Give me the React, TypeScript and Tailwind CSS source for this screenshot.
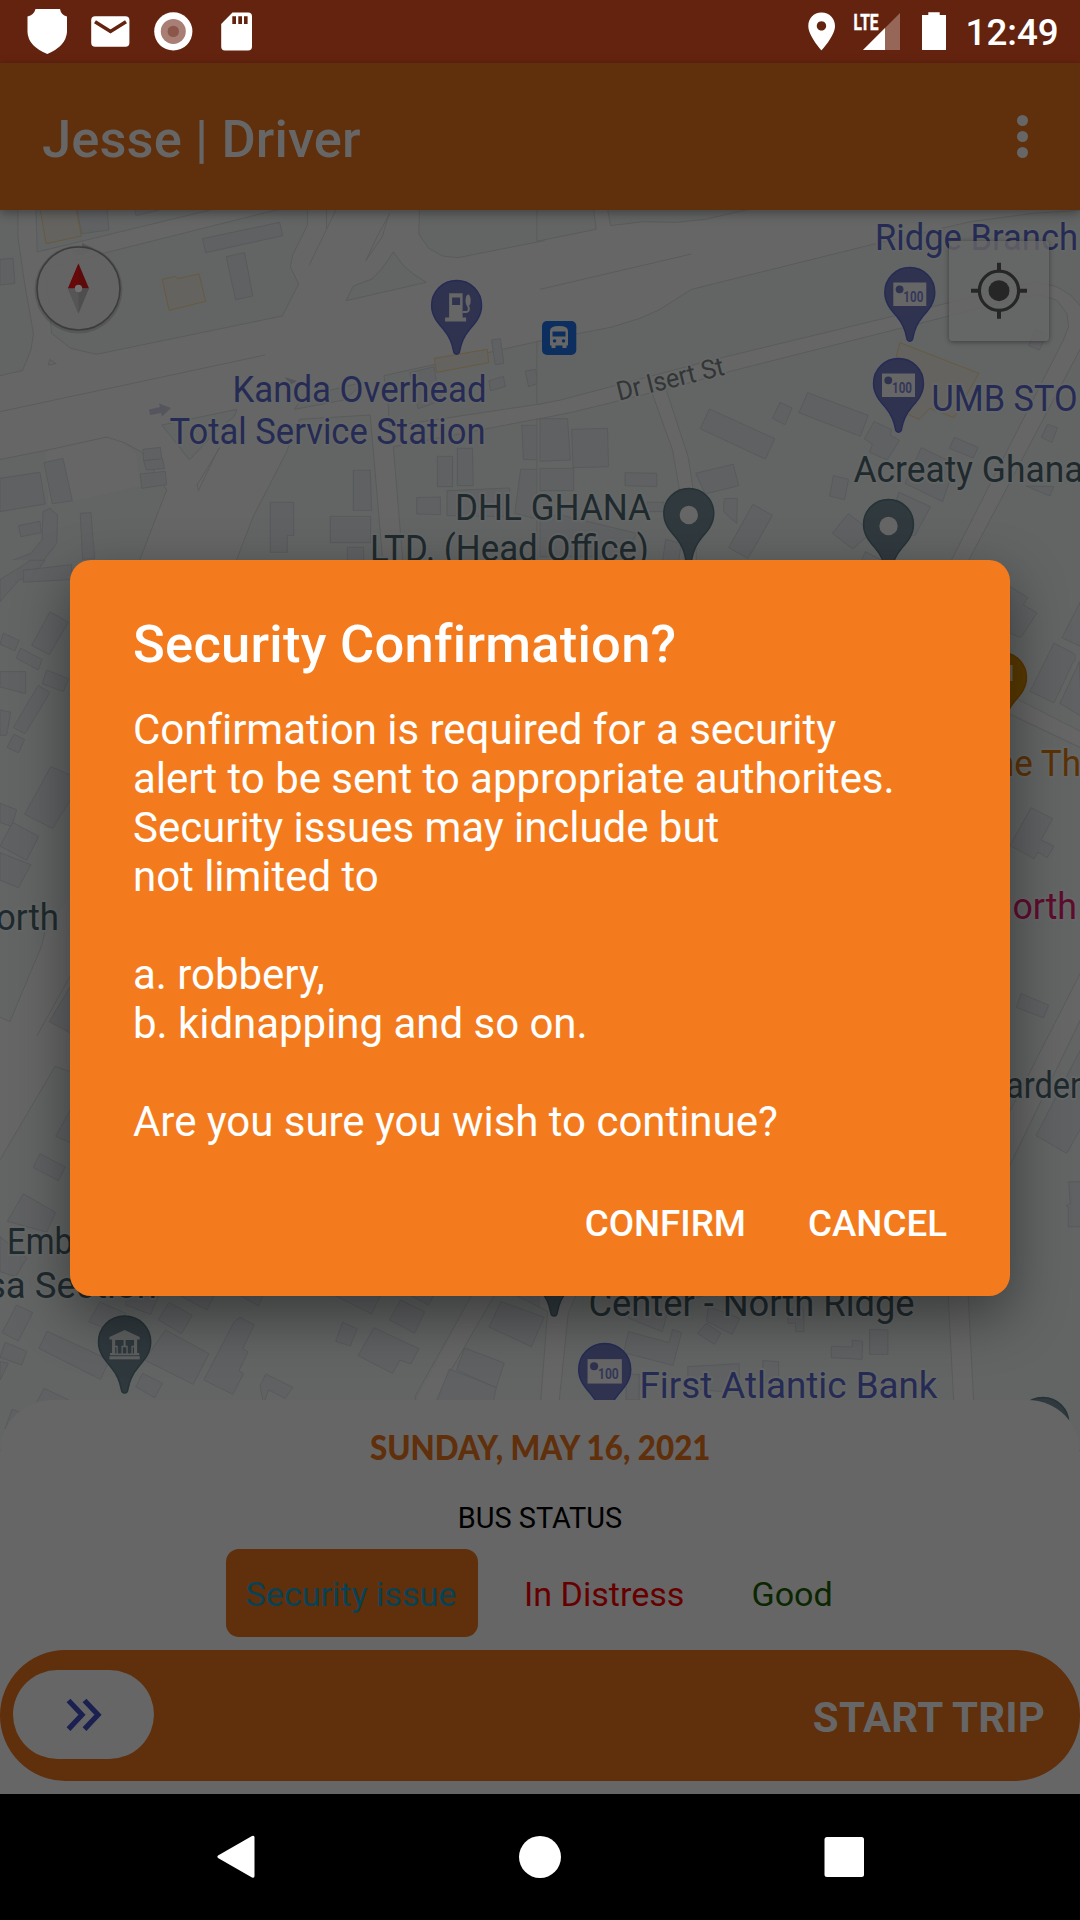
import React from "react";

const font = '"Roboto", "Noto Sans", sans-serif';

const LAND = "#626564";
const ROAD = "#666666";
const EDGE = "#5a5c5b";
const BUILDING = "#606163";
const BUILDING_EDGE = "#56585a";
const NAVY = "#252b54";
const SLATE = "#1f2a2e";

type TileProps = {
  x: number;
  y: number;
  sx?: number;
  sy?: number;
  land?: string[];
  roads?: string[];
  lines?: string[];
  buildings?: string[];
  shops?: string[];
};

function Tile({ x, y, sx = 0.34439, sy = 0.33333, land = [], roads = [], lines = [], buildings = [], shops = [] }: TileProps) {
  return (
    <g transform={`translate(${x} ${y}) scale(${sx} ${sy})`}>
      {land.map((p) => (
        <polygon key={p} points={p} fill={LAND} stroke={EDGE} strokeWidth="1" vectorEffect="non-scaling-stroke" />
      ))}
      {roads.map((p) => (
        <polygon key={p} points={p} fill={ROAD} />
      ))}
      {lines.map((p) => (
        <polyline key={p} points={p} fill="none" stroke={EDGE} strokeWidth="1" vectorEffect="non-scaling-stroke" />
      ))}
      {buildings.map((p) => (
        <polygon key={p} points={p} fill={BUILDING} stroke={BUILDING_EDGE} strokeWidth="0.8" vectorEffect="non-scaling-stroke" />
      ))}
      {shops.map((p) => (
        <polygon key={p} points={p} fill="#65635f" stroke="#675a40" strokeWidth="1" vectorEffect="non-scaling-stroke" />
      ))}
    </g>
  );
}

function Pin({ x, y, r = 25, fill, edge, children }: { x: number; y: number; r?: number; fill: string; edge: string; children?: React.ReactNode }) {
  return (
    <g transform={`translate(${x} ${y}) scale(${r / 25})`}>
      <path
        d="M0 .5C14 .5 25 11.500 25 25.500C25 36 19 42.500 13 49.500C7.500 56 4.500 63 3.200 70.500C2.600 75.500 -2.600 75.500 -3.200 70.500C-4.500 63 -7.500 56 -13 49.500C-19 42.500 -25 36 -25 25.500C-25 11.500 -14 .5 0 .5Z"
        fill={fill}
        stroke={edge}
        strokeWidth="1.4"
      />
      {children}
    </g>
  );
}

function CashPin({ x, y, r }: { x: number; y: number; r?: number }) {
  return (
    <Pin x={x} y={y} r={r} fill="#2f3350" edge={NAVY}>
      <rect x="-16.500" y="15.500" width="33" height="23.500" fill="#666" />
      <circle cx="-10.200" cy="22.300" r="3.900" fill="#2f3350" />
      <text x="-6.500" y="35" fontSize="14" fontWeight="700" textLength="20" lengthAdjust="spacingAndGlyphs" fill="#34375a">100</text>
    </Pin>
  );
}

function PlacePin({ x, y, r }: { x: number; y: number; r?: number }) {
  return (
    <Pin x={x} y={y} r={r} fill="#30393e" edge="#253236">
      <circle cx="0" cy="27" r="9.200" fill="#666" />
    </Pin>
  );
}

function Label({ x, y, w, fill, size = 37.5, children }: { x: number; y: number; w?: number; fill: string; size?: number; children: string }) {
  return (
    <text
      x={x}
      y={y}
      fontSize={size}
      fill={fill}
      stroke="#656766"
      strokeWidth="4"
      strokeLinejoin="round"
      paintOrder="stroke"
      textLength={w}
      lengthAdjust="spacingAndGlyphs"
    >
      {children}
    </text>
  );
}

function MapCanvas() {
  return (
    <svg viewBox="0 210 1080 1240" width="1080" height="1240" className="block" style={{ fontFamily: font }}>
      <rect x="0" y="210" width="1080" height="1240" fill={ROAD} />

      <Tile
        x={0}
        y={200}
        land={[
          "-9,20 52,20 52,110 70,240 97,400 90,450 65,512 -9,529",
          "104,20 108,156 650,20",
          "130,205 300,160 840,20 893,20 893,75 850,165 843,200 867,252 820,348 280,463 205,445 150,400 140,290",
          "1218,20 1216,102 1245,145 1285,168 1330,173 1580,122 1580,20",
          "1142,156 1170,195 1200,222 1238,247 1005,302 1026,258 1080,237 1110,205",
          "145,478 163,491 140,495",
          "-9,780 130,752 310,711 360,728 410,755 484,870 404,1085 -9,1085",
          "470,675 688,628 680,650 640,680 550,780 520,740",
          "855,628 880,590 1060,545 1000,600",
          "1115,527 1568,423 1580,610 1130,680 1128,620",
          "870,658 1075,645 1112,1090 683,1090 735,950 830,760",
          "1142,740 1570,655 1570,1090 1170,1090",
        ]}
        roads={["132,754 310,713 360,730 395,760 408,858 140,920"]}
        lines={["0,635 770,465", "948,20 948,85", "980,20 898,195", "1130,40 1110,110 1062,182 1095,110 1132,40", "640,740 572,855 576,872 635,745"]}
        buildings={[
          "222,20 310,20 316,90 237,101",
          "390,20 395,47 480,25",
          "588,116 812,67 821,107 597,158",
          "657,170 710,158 734,288 684,299",
          "0,178 38,175 43,250 0,255",
          "128,788 183,775 210,902 152,912",
          "0,835 116,817 131,912 0,935",
          "415,748 466,742 470,778 417,782",
          "417,782 472,776 478,806 425,810",
          "407,822 480,814 484,854 412,865",
          "54,977 116,964 120,998 60,1010",
          "233,940 264,938 275,1076 240,1078",
          "125,935 145,925 167,945 165,1030 120,1090 20,1110 0,1110 0,1095 90,1060 122,1020",
          "785,907 853,907 853,1006 834,1006 834,1057 785,1057",
          "1026,811 1075,811 1079,931 1026,931",
          "959,949 1076,949 1076,1028 959,1028",
          "1009,1042 1056,1042 1056,1090 1009,1090",
          "1270,769 1314,769 1314,860 1270,860",
          "1328,745 1372,745 1374,857 1328,857",
          "1210,893 1279,891 1279,944 1210,942",
          "1298,872 1480,864 1480,950 1298,947",
          "1427,420 1453,416 1463,490 1438,494",
          "1190,518 1260,500 1270,560 1285,600 1214,626",
          "1420,542 1462,529 1467,560 1424,572",
          "1525,513 1555,508 1563,550 1535,560",
          "1515,676 1568,676 1568,780 1520,778",
          "1512,808 1568,808 1568,960 1495,940",
        ]}
        shops={["115,20 220,20 236,108 134,131", "471,238 510,229 515,236 578,222 597,304 491,331", "1261,475 1415,448 1419,488 1268,517"]}
      />
      <g fill="#55565d">
        <path d="M149 409.500L160 407L159 403.500L171 408L162 416.500L161 413L150 415Z" />
        <path d="M72 250L82 248V243L93 248L84 255L73 255Z" />
        <path d="M285 377L297 381L290 385Z" />
      </g>

      <Tile
        x={540}
        y={200}
        land={[
          "-9,20 155,20 163,88 -9,124",
          "195,20 205,77 300,65 395,67 480,58 640,20",
          "-9,425 100,403 205,382 290,355 345,330 440,268 970,132 1250,65 1430,40 1580,30 1580,330 1540,285 1500,260 1440,245 1260,290 500,480 60,600 -9,614",
          "-9,658 100,635 325,578 385,750 405,870 420,1090 -9,1090",
          "366,568 560,512 1180,350 1400,292 1450,285 1500,300 1530,340 1535,380 1520,420 1185,1100 455,1100 445,870 430,770",
          "1580,425 1235,1100 1580,1100",
        ]}
        lines={["0,268 440,162"]}
        buildings={[
          "0,656 80,656 88,780 0,784",
          "92,688 196,685 199,800 96,803",
          "0,805 98,805 98,872 0,872",
          "247,818 339,820 339,860 247,857",
          "492,627 682,716 654,777 465,686",
          "697,607 732,624 711,674 675,655",
          "777,578 953,646 930,709 752,638",
          "970,665 1020,688 1018,706 1044,721 1008,780 957,757 965,733 942,716",
          "1203,712 1272,742 1258,774 1189,745",
          "1107,743 1192,785 1190,840 1169,905 1060,850",
          "1042,877 1134,920 1088,1008 1010,980",
          "852,827 896,838 884,899 841,888",
          "895,941 965,995 908,1047 849,1000",
          "452,820 561,793 577,857 480,882",
          "535,896 573,895 571,970 533,935",
          "618,913 675,946 604,1075 548,1043",
          "365,1018 410,1030 402,1090 355,1090",
          "1438,388 1472,400 1450,450 1419,437",
          "1474,673 1503,683 1486,727 1456,712",
          "1412,858 1492,860 1480,888",
          "945,1055 1010,1090 930,1090",
          "310,907 360,907 360,935 310,935",
          "60,945 280,1000 250,1070 0,1070 0,950",
        ]}
        shops={["1045,428 1274,520 1202,653 1132,625 1100,658 1000,610"]}
      />

      <rect x="0" y="560" width="1080" height="900" fill={LAND} />
      <Tile
        x={0}
        y={540}
        sx={0.33333}
        sy={0.5485}
        roads={["0,870 30,878 125,735 160,690 215,650 215,970 165,960 0,1130"]}
        lines={["0,870 30,878 125,740 140,700", "215,790 110,905", "0,1130 165,960 215,970"]}
        buildings={[
          "0,72 60,50 90,37 135,37 110,58 55,74 0,112",
          "150,131 205,150 148,209 95,192",
          "10,170 57,183 45,202 0,190",
          "62,197 126,218 115,237 48,215",
          "0,240 77,240 77,280 0,268",
          "140,237 206,253 190,276 127,262",
          "115,265 150,278 75,353 40,342",
          "0,310 32,314 20,356 0,356",
          "42,354 74,364 55,388 21,378",
          "153,413 215,430 215,470 158,526 74,500",
          "0,480 50,492 35,522 0,515",
          "38,515 116,540 80,584 0,558",
          "0,570 93,592 55,634 0,620",
          "70,55 215,45 215,72 70,77",
          "215,810 148,878 215,900",
          "120,1119 196,1143 175,1168 100,1144",
          "215,1035 167,1087 215,1100",
          "70,1192 167,1226 140,1262 22,1242",
        ]}
      />
      <Tile
        x={960}
        y={540}
        sx={0.33333}
        sy={0.5485}
        roads={["130,275 365,348 365,378 130,310", "365,785 130,1060 130,1160 365,870"]}
        lines={["130,277 365,350", "130,312 365,380", "365,785 130,1065", "365,870 130,1165"]}
        buildings={[
          "150,85 203,105 190,118 231,133 182,178 150,170",
          "282,188 345,208 345,220 340,222 282,297 210,276",
          "365,108 306,178 365,195",
          "358,222 300,298 365,322",
          "213,488 278,508 243,547 282,558 262,579 234,569 222,581 150,557",
          "183,827 266,848 250,871 169,852",
          "365,925 228,1086 320,1118 365,1070",
          "326,1170 365,1170 365,1252 325,1252 325,1218 319,1213 331,1210",
        ]}
      />

      <Tile
        x={0}
        y={1180}
        roads={["1370,345 1436,345 1310,570 1240,700 1190,700"]}
        lines={["1370,345 1205,650 1212,690", "1436,345 1310,570"]}
        buildings={[
          "0,170 78,235 45,290 0,275",
          "48,375 95,398 53,483 6,458",
          "15,487 78,514 63,555 0,532",
          "0,545 24,550 0,600",
          "137,454 318,540 292,598 113,505",
          "290,366 365,400 340,460 258,425",
          "370,345 460,350 437,403 365,375",
          "520,345 622,345 601,390",
          "695,345 765,345 750,377",
          "491,367 558,406 527,461 460,419",
          "480,450 607,521 561,613 420,540",
          "697,412 738,435 705,505 720,516 694,572 707,581 676,643 592,600 680,425",
          "414,580 472,610 449,653 394,620",
          "772,582 850,622 828,655 780,630 765,670 755,618",
          "128,625 200,660 180,700 100,680",
          "970,345 1105,345 1079,402",
          "1163,360 1233,395 1204,459 1131,420",
          "1190,345 1260,345 1244,375",
          "995,427 1037,446 1017,498 975,484",
          "1086,443 1216,506 1193,552 1161,540 1140,580 1040,527",
          "1495,345 1580,345 1580,388",
          "1455,365 1580,412 1543,500 1420,441",
          "1349,504 1464,549 1441,623 1326,570",
          "1305,567 1441,623 1425,700 1260,685",
          "35,688 80,705 50,760 15,745",
        ]}
      />
      <Tile
        x={540}
        y={1180}
        roads={["25,340 105,340 78,430 55,700 0,700 22,395 0,385 0,340", "1185,340 1243,340 1260,700 1202,700"]}
        lines={["0,382 22,395 0,690", "105,345 82,400 55,670", "1185,340 1202,680", "1243,340 1260,680"]}
        buildings={[
          "258,415 355,455 375,380 480,345 250,345",
          "257,455 375,488 385,448 411,458 386,556 243,518",
          "483,430 525,460 507,493 457,460",
          "490,380 580,415 558,463 483,423",
          "720,385 766,385 766,455 742,455 742,430 720,430",
          "846,499 907,501 907,481 937,484 935,538 846,533",
          "957,448 1010,450 1010,523 957,523",
          "429,560 578,551 580,640 429,625",
          "647,542 693,545 693,610 647,605",
          "250,583 288,583 288,660 250,660",
        ]}
      />

      <Pin x={456.6} y={280} fill="#2f3350" edge={NAVY}>
        <path d="M-7.500 13.300H6V37.500H9.500V41.500H-11.500V37.500H-7.500ZM-4.500 17.500V25H3.500V17.500Z" fill="#666" fillRule="evenodd" />
        <path d="M6 32H9.500Q12.500 32 12.200 28L11 24.500V16L12.500 15" fill="none" stroke="#666" strokeWidth="2" />
        <ellipse cx="11.500" cy="20.500" rx="2.600" ry="5.500" fill="#666" />
      </Pin>
      <CashPin x={909.8} y={267} />
      <CashPin x={898.5} y={358} />
      <PlacePin x={688.8} y={488} />
      <PlacePin x={888.5} y={499} />
      <Pin x={1001.500} y={652} fill="#5a3a00" edge="#573300">
        <rect x="8" y="13" width="3" height="16" fill="#66604f" />
      </Pin>
      <PlacePin x={554} y={1238} r={26.3} />
      <Pin x={124.600} y={1315.500} r={26.1} fill="#2f383d" edge="#253236">
        <path d="M0 14L14.500 20.500V23H12V36H14V38H-14V36H-12V23H-14.500V20.500Z" fill="#5e6060" />
        <path d="M-9 23.500H-1V29H-3V36.500H-6.500V29H-9ZM1 23.500H9V29H6.500V36.500H3V29H1Z" fill="#2f383d" />
        <path d="M-9 30.500H-7.800V36.500H-9ZM7.800 30.500H9V36.500H7.800ZM-1.700 30.500H1.700V36.500H-1.700Z" fill="#2f383d" />
        <rect x="-14.500" y="39" width="29" height="3" fill="#5e6060" />
      </Pin>
      <CashPin x={604.7} y={1343} r={26} />
      <PlacePin x={1042.8} y={1397} r={26} />

      <g transform="translate(542 321)">
        <rect width="34.300" height="34" rx="5" fill="#0c2f60" />
        <path d="M8 10Q8 5 17 5Q26 5 26 10V24.500H24.500V27H20.500V24.500H13.500V27H9.500V24.500H8ZM10.500 10.500V15.500H23.500V10.500ZM12.500 18.200A1.700 1.700 0 1 0 12.600 18.200ZM21.500 18.200A1.700 1.700 0 1 0 21.600 18.200Z" fill="#666" fillRule="evenodd" />
      </g>

      <Label x={232.500} y={402.300} w={254} fill={NAVY}>Kanda Overhead</Label>
      <Label x={169.500} y={444} w={316} fill={NAVY}>Total Service Station</Label>
      <Label x={455} y={519.700} w={196} fill={SLATE}>DHL GHANA</Label>
      <Label x={370} y={561.300} w={279} fill={SLATE}>LTD. (Head Office)</Label>
      <Label x={875} y={250} w={203} fill={NAVY}>Ridge Branch</Label>
      <Label x={931.500} y={410.500} w={146} fill={NAVY}>UMB STO</Label>
      <Label x={853.500} y={481.700} w={230} fill={SLATE}>Acreaty Ghana</Label>
      <g transform="rotate(-13.8 620 401)">
        <Label x={619} y={400.500} w={110} size={26.5} fill="#333536">Dr Isert St</Label>
      </g>
      <Label x={-4} y={929.700} w={93} fill={SLATE}>orth R</Label>
      <Label x={7} y={1254} w={84} fill={SLATE}>Emba</Label>
      <Label x={-13} y={1297.700} w={170} fill={SLATE}>sa Section</Label>
      <Label x={995} y={776} w={86} fill="#5a3206">ne Th</Label>
      <Label x={987} y={918.500} w={90} fill="#5e0c2e">North</Label>
      <Label x={1006} y={1098} w={82} fill={SLATE}>arden</Label>
      <Label x={588.500} y={1316} w={326} fill={SLATE}>Center - North Ridge</Label>
      <Label x={639.500} y={1398} w={298} fill={NAVY}>First Atlantic Bank</Label>

      <g>
        <circle cx="78.500" cy="289.500" r="44" fill="#000" opacity=".12" />
        <circle cx="78.500" cy="288.500" r="41.500" fill="#666" fillOpacity=".85" stroke="#3c3c3c" strokeWidth="1.600" />
        <path d="M78.500 263.500L89 288.500H68Z" fill="#5c0a0a" />
        <path d="M78.500 263.500V288.500H68Z" fill="#680808" />
        <path d="M78.500 313.500L89 288.500H68Z" fill="#4e4e4e" />
        <path d="M78.500 313.500V288.500H68Z" fill="#565656" />
        <circle cx="78.500" cy="288.500" r="3.700" fill="#707070" />
      </g>
    </svg>
  );
}

function MyLocation() {
  return (
    <div className="absolute left-[949px] top-[31px] flex h-[100px] w-[100px] items-center justify-center rounded-[4px] bg-[#666666]/80 shadow-[0_1px_5px_rgba(0,0,0,0.4)]">
      <svg viewBox="0 0 60 60" className="h-[60px] w-[60px]">
        <circle cx="30" cy="29.700" r="19.600" fill="none" stroke="#262626" strokeWidth="3.200" />
        <circle cx="30" cy="29.700" r="10.500" fill="#262626" />
        <path d="M30 1.700V10.500M30 49V57.700M2 29.700H10.500M49.500 29.700H58" stroke="#262626" strokeWidth="4" />
      </svg>
    </div>
  );
}

function StatusBar() {
  return (
    <div className="flex h-[63px] shrink-0 justify-between bg-[#64230f]">
      <svg viewBox="0 0 270 63" className="h-[63px] w-[270px]">
        <path d="M35.500 9H60Q61 15 67 16.500V32Q66 46 47.300 54Q28 46 27.500 32V16.500Q34 15 35.500 9Z" fill="#fff" />
        <rect x="91.200" y="16.200" width="38.200" height="30.600" rx="4" fill="#fff" />
        <path d="M95 21.800L110.500 31.500L126 21.800" fill="none" stroke="#64230f" strokeWidth="3.600" />
        <circle cx="173.300" cy="31.400" r="19.100" fill="#fff" />
        <circle cx="173.300" cy="31.400" r="12.500" fill="#a97f75" />
        <circle cx="173.300" cy="31.400" r="5.700" fill="#8b574b" />
        <path d="M232.500 12.500H248Q252 12.500 252 16.500V46.500Q252 50.500 248 50.500H225Q221.200 50.500 221.200 46.500V24Z" fill="#fff" />
        <path d="M232.300 16.300H236V24H232.300ZM238.300 16.300H242V24H238.300ZM244 16.300H247.600V24H244Z" fill="#64230f" />
      </svg>
      <div className="flex">
        <svg viewBox="800 0 160 63" className="h-[63px] w-[160px]">
          <path d="M821.500 12.500C813.500 12.500 808.300 18.500 808.300 26C808.300 36 821.500 50.300 821.500 50.300S835 36 835 26C835 18.500 829.500 12.500 821.500 12.500ZM821.500 21.200A4.700 4.700 0 1 1 821.400 21.200Z" fill="#fff" fillRule="evenodd" />
          <path d="M900 13V50H863Z" fill="#966658" />
          <path d="M885 28V50H863Z" fill="#fff" />
          <text x="853.500" y="30" fontSize="22.500" fontWeight="700" fill="#fff" stroke="#fff" strokeWidth="0.5" textLength="25" lengthAdjust="spacingAndGlyphs">LTE</text>
          <path d="M928.300 12.200H939.700V15H946V50H922V15H928.300Z" fill="#fff" />
        </svg>
        <div className="w-[120px] pl-[5.500px] pt-[11px] text-[36.750px] font-medium leading-[44px] text-white">12:49</div>
      </div>
    </div>
  );
}

function AppBar() {
  return (
    <div className="relative z-10 flex h-[147px] shrink-0 items-center justify-between bg-[#602f0b] pl-[42px] pr-[52px] shadow-[0_3px_10px_rgba(0,0,0,0.35)]">
      <h1 className="pt-[4px] text-[52.500px] font-medium leading-[62px] tracking-[0.1px] text-[#666666]">Jesse | Driver</h1>
      <div className="flex flex-col gap-[5px]">
        <span className="h-[11px] w-[11px] rounded-full bg-[#666666]" />
        <span className="h-[11px] w-[11px] rounded-full bg-[#666666]" />
        <span className="h-[11px] w-[11px] rounded-full bg-[#666666]" />
      </div>
    </div>
  );
}

function TripPanel() {
  return (
    <div className="absolute inset-x-0 bottom-0 flex h-[394px] flex-col items-center rounded-t-[52px] bg-[#666666]">
      <div className="mt-[24px] scale-x-[0.895] whitespace-nowrap text-[35px] font-black leading-[44px] text-[#602f0b]" style={{ fontFamily: '"Lato", sans-serif' }}>
        SUNDAY, MAY 16, 2021
      </div>
      <div className="mt-[32px] text-[28.900px] leading-[36px] text-black">BUS STATUS</div>
      <div className="mt-[13px] flex h-[88px] w-full pl-[226px] text-[34.100px] leading-[40px]">
        <div className="flex w-[252px] items-center justify-center rounded-[13px] bg-[#602f0b] pr-[2px] pt-[1px] text-[#084254]">Security issue</div>
        <div className="ml-[46px] flex items-center pt-[1px] text-[#660000]">In Distress</div>
        <div className="ml-[67px] flex items-center pt-[1px] text-[#0b2600]">Good</div>
      </div>
      <div className="mt-[13px] flex h-[131px] w-full items-center justify-between rounded-full bg-[#602f0b] pl-[13px] pr-[35px]">
        <div className="mb-[2px] flex h-[89px] w-[141px] items-center justify-center rounded-full bg-[#666666]">
          <svg viewBox="0 0 40 36" className="h-[36px] w-[40px]">
            <path d="M4.500 3.500L18 17.800L4.500 32.100M20.500 3.500L34 17.800L20.500 32.100" fill="none" stroke="#1a2050" strokeWidth="5.200" />
          </svg>
        </div>
        <div className="pt-[4px] text-[42px] font-bold leading-[50px] tracking-[0.200px] text-[#666666]">START TRIP</div>
      </div>
    </div>
  );
}

function NavigationBar() {
  return (
    <div className="flex h-[126px] shrink-0 bg-black">
      <svg viewBox="0 0 1080 126" className="h-[126px] w-[1080px]" fill="#fff">
        <path d="M218 61.500Q216.500 62.800 218 64L252 83.500Q254.500 84.500 254.500 82V43.500Q254.500 41 252 42Z" />
        <circle cx="540" cy="63" r="21" />
        <rect x="824.500" y="43" width="39.500" height="40" rx="2.500" />
      </svg>
    </div>
  );
}

function SecurityDialog() {
  return (
    <div className="absolute left-[70px] top-[560px] z-20 h-[736px] w-[940px] rounded-[21px] bg-[#f47b1d] pl-[63px] pr-[63px] pt-[53px] text-white shadow-[0_20px_56px_rgba(0,0,0,0.42)]">
      <h2 className="text-[52.500px] font-medium leading-[62px] tracking-[0.250px]">Security Confirmation?</h2>
      <p className="mt-[30px] whitespace-pre text-[42px] leading-[49px] tracking-[-0.030px]">
        {"Confirmation is required for a security\nalert to be sent to appropriate authorites.\nSecurity issues may include but\nnot limited to\n\na. robbery,\nb. kidnapping and so on.\n\nAre you sure you wish to continue?"}
      </p>
      <div className="mt-[56px] flex justify-end gap-[62px] text-[36.750px] font-medium leading-[44px]">
        <button className="font-medium">CONFIRM</button>
        <button className="font-medium">CANCEL</button>
      </div>
    </div>
  );
}

export default function App() {
  return (
    <div className="relative flex h-[1920px] w-[1080px] flex-col overflow-hidden bg-black" style={{ fontFamily: font }}>
      <StatusBar />
      <AppBar />
      <main className="relative h-[1584px] shrink-0 overflow-hidden">
        <MapCanvas />
        <MyLocation />
        <TripPanel />
      </main>
      <NavigationBar />
      <SecurityDialog />
    </div>
  );
}
